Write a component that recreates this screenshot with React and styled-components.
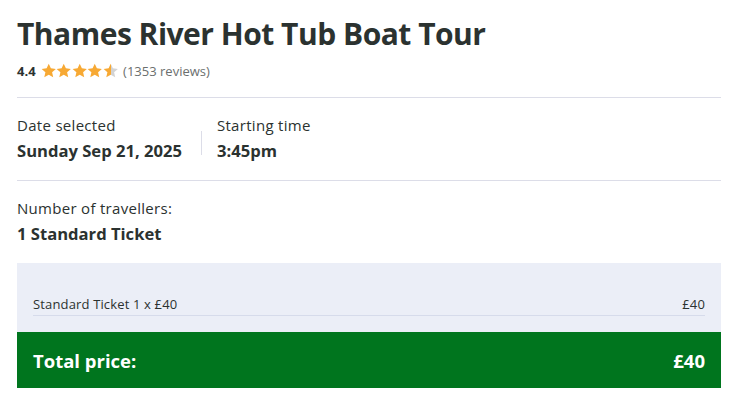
import React from "react";
import styled, { createGlobalStyle } from "styled-components";

const GlobalStyle = createGlobalStyle`
  body {
    margin: 0;
    background: #fff;
    font-family: "Open Sans", "Noto Sans", sans-serif;
    color: #2b3230;
  }
`;

const Page = styled.div`
  width: 704px;
  padding: 14px 0 0 17px;
`;

const Title = styled.h1`
  margin: 0;
  font-size: 30px;
  font-weight: 700;
  line-height: 40px;
  letter-spacing: -0.5px;
  color: #2b3230;
`;

const RatingRow = styled.div`
  display: flex;
  align-items: center;
  gap: 4px;
  margin-top: 8px;
  height: 18px;
  font-size: 13px;
`;

const Score = styled.span`
  font-weight: 700;
`;

const Stars = styled.span`
  display: flex;
  margin-left: 1px;
`;

const Reviews = styled.span`
  color: #6b6f6e;
  margin-left: 1px;
`;

const Divider = styled.div`
  height: 1px;
  background: #dcdde8;
  margin: ${({ $m }) => $m || "0"};
`;

const InfoRow = styled.div`
  display: flex;
  align-items: center;
  padding: 18px 0 18px;
`;

const InfoBlock = styled.div`
  display: flex;
  flex-direction: column;
  gap: 5px;
`;

const VSep = styled.div`
  width: 1px;
  height: 24px;
  background: #dcdde8;
  margin: 8px 15px 0 19px;
`;

const Label = styled.div`
  font-size: 15px;
  line-height: 19px;
  letter-spacing: 0.3px;
  color: #2b3230;
`;

const Value = styled.div`
  font-size: 16.6px;
  font-weight: 700;
  line-height: 22px;
`;

const Travellers = styled(InfoBlock)`
  padding: 18px 0 18px;
`;

const Summary = styled.div`
  background: #ebeef7;
  padding: 33px 16px 16px;
`;

const LineItem = styled.div`
  display: flex;
  justify-content: space-between;
  font-size: 13px;
  line-height: 16px;
  letter-spacing: 0.15px;
  padding-bottom: 3px;
  border-bottom: 1px solid #d6dbeb;
  color: #2b3230;
`;

const TotalBar = styled.div`
  display: flex;
  justify-content: space-between;
  align-items: center;
  background: #00751e;
  color: #fff;
  height: 56px;
  padding: 0 16px;
  font-size: 18.5px;
  font-weight: 700;
`;

const Star = ({ fill }) => {
  const id = `half-${fill}`;
  return (
    <svg width="15.5" height="15.5" viewBox="0 0 24 24">
      <defs>
        <linearGradient id={id}>
          <stop offset={`${fill * 100}%`} stopColor="#f7a934" />
          <stop offset={`${fill * 100}%`} stopColor="#d3d3d3" />
        </linearGradient>
      </defs>
      <path
        d="M12 1.2l3.3 7.1 7.7.8-5.8 5.2 1.7 7.6L12 18l-6.9 3.9 1.7-7.6L1 9.1l7.7-.8z"
        fill={`url(#${id})`}
      />
    </svg>
  );
};

export default function App() {
  return (
    <Page>
      <GlobalStyle />
      <Title>Thames River Hot Tub Boat Tour</Title>
      <RatingRow>
        <Score>4.4</Score>
        <Stars>
          {[1, 1, 1, 1, 0.5].map((f, i) => (
            <Star key={i} fill={f} />
          ))}
        </Stars>
        <Reviews>(1353 reviews)</Reviews>
      </RatingRow>
      <Divider $m="17px 0 0" />
      <InfoRow>
        <InfoBlock>
          <Label>Date selected</Label>
          <Value>Sunday Sep 21, 2025</Value>
        </InfoBlock>
        <VSep />
        <InfoBlock>
          <Label>Starting time</Label>
          <Value>3:45pm</Value>
        </InfoBlock>
      </InfoRow>
      <Divider />
      <Travellers>
        <Label>Number of travellers:</Label>
        <Value>1 Standard Ticket</Value>
      </Travellers>
      <Summary>
        <LineItem>
          <span>Standard Ticket 1 x £40</span>
          <span>£40</span>
        </LineItem>
      </Summary>
      <TotalBar>
        <span>Total price:</span>
        <span>£40</span>
      </TotalBar>
    </Page>
  );
}
